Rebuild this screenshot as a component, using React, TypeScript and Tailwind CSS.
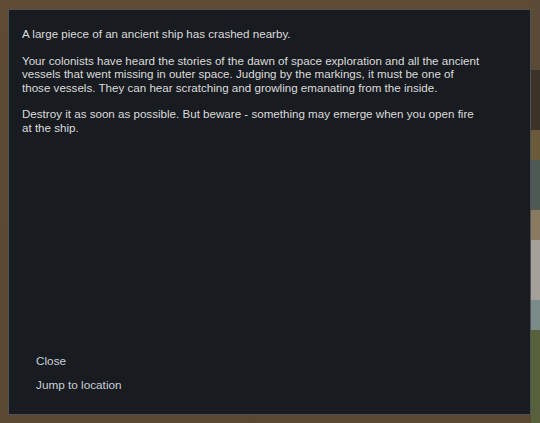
import React from 'react';

const paragraphs = [
  'A large piece of an ancient ship has crashed nearby.',
  'Your colonists have heard the stories of the dawn of space exploration and all the ancient vessels that went missing in outer space. Judging by the markings, it must be one of those vessels. They can hear scratching and growling emanating from the inside.',
  'Destroy it as soon as possible. But beware - something may emerge when you open fire at the ship.',
];

// strip of map visible on the right edge, top to bottom
const strip = [
  { h: 'h-[70px]', c: 'bg-[#5a4a36]' },
  { h: 'h-[60px]', c: 'bg-[#3b3328]' },
  { h: 'h-[30px]', c: 'bg-[#6a5a3a]' },
  { h: 'h-[50px]', c: 'bg-[#4f5a55]' },
  { h: 'h-[30px]', c: 'bg-[#8a7a60]' },
  { h: 'h-[60px]', c: 'bg-[#a5a09a]' },
  { h: 'h-[30px]', c: 'bg-[#7a8a88]' },
  { h: 'h-[93px]', c: 'bg-[#56603a]' },
];

export default function App() {
  return (
    <div
      className="w-[540px] h-[423px] overflow-hidden flex bg-[#5e4a33] bg-gradient-to-b from-[#5f4b34] to-[#5a4833]"
      style={{ fontFamily: '"Liberation Sans", Arial, sans-serif' }}
    >
      <div className="pl-[8px] pt-[9px]">
        {/* dialog */}
        <div className="w-[523px] h-[406px] bg-[#181b20] border border-[#4d525a] flex flex-col justify-between pl-[13px] pt-[17px] pb-[23px]">
          <div className="w-[461px] flex flex-col gap-[13.4px] text-[11.6px] leading-[13.4px] text-[#dcdcdc]">
            {paragraphs.map((p, i) => (
              <p key={i}>{p}</p>
            ))}
          </div>

          {/* options */}
          <div className="flex flex-col gap-[11px] pl-[14px] text-[11.75px] leading-[13px] text-[#c9ced6]">
            <span>Close</span>
            <span>Jump to location</span>
          </div>
        </div>
      </div>

      <div className="flex-1 flex flex-col">
        {strip.map((s, i) => (
          <div key={i} className={`${s.h} ${s.c}`} />
        ))}
      </div>
    </div>
  );
}
